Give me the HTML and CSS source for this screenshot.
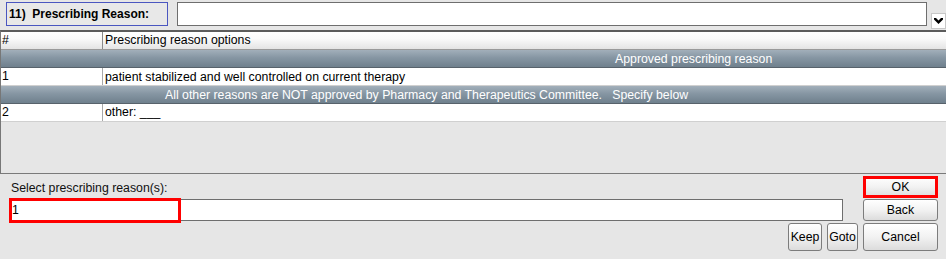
FILE: index.html
```html
<!DOCTYPE html>
<html>
<head>
<meta charset="utf-8">
<link rel="stylesheet" href="styles.css">
</head>
<body>
<div class="top">
  <div class="qlabel">11)&nbsp; Prescribing Reason:</div>
  <div class="qinput"></div>
  <div class="combo"><svg width="9" height="6" viewBox="0 0 9 6"><path d="M0 0h2l2.5 2.5L7 0h2v1.5L4.5 6 0 1.5z" fill="#000"/></svg></div>
</div>
<div class="table">
  <div class="row head"><div class="c1">#</div><div class="c2">Prescribing reason options</div></div>
  <div class="group g1">Approved prescribing reason</div>
  <div class="row data"><div class="c1">1</div><div class="c2 clip">patient stabilized and well controlled on current therapy</div></div>
  <div class="group g2">All other reasons are NOT approved by Pharmacy and Therapeutics Committee.&nbsp;&nbsp; Specify below</div>
  <div class="row data"><div class="c1">2</div><div class="c2">other: ___</div></div>
</div>
<div class="bottom">
  <div class="sel-label">Select prescribing reason(s):</div>
  <div class="btn ok">OK<span class="mark"></span></div>
  <div class="sel-wrap"><div class="sel-input">1</div><span class="mark mark-input"></span></div>
  <div class="btn back">Back</div>
  <div class="small-btns"><div class="btn keep">Keep</div><div class="btn goto">Goto</div></div>
  <div class="btn cancel">Cancel</div>
</div>
</body>
</html>
```
FILE: styles.css
```css
html, body {
  margin: 0;
  padding: 0;
  background: #e6e6e6;
  font-family: "Liberation Sans", Arial, sans-serif;
  font-size: 12.3px;
  color: #000;
  width: 946px;
  height: 259px;
  overflow: hidden;
}
.top {
  height: 30px;
  display: flex;
  align-items: flex-start;
  padding-left: 6px;
  box-sizing: border-box;
}
.qlabel {
  margin-top: 2px;
  width: 162px;
  height: 24px;
  box-sizing: border-box;
  border: 1px solid #4a56c0;
  background: #e8e8e8;
  font-weight: bold;
  font-size: 12px;
  line-height: 22px;
  padding-left: 2px;
  white-space: nowrap;
}
.qinput {
  margin-top: 2px;
  margin-left: 9px;
  width: 750px;
  height: 24px;
  box-sizing: border-box;
  border: 1px solid #6e6e6e;
  background: #fff;
}
.combo {
  margin-top: 13px;
  margin-left: 4px;
  width: 15px;
  height: 16px;
  box-sizing: border-box;
  border: 1px solid #c8c8c8;
  background: #fff;
  display: flex;
  align-items: center;
  justify-content: center;
}
.table {
  height: 144px;
  box-sizing: border-box;
  border-top: 2px solid #5c5c5c;
  border-left: 1px solid #777;
  border-bottom: 1px solid #7a7a7a;
  background: #e6e6e6;
}
.row {
  display: flex;
  height: 18px;
  box-sizing: border-box;
  line-height: 17px;
  white-space: nowrap;
}
.row .c1 {
  width: 102px;
  padding-left: 1px;
  box-sizing: border-box;
  border-right: 1px solid #a8a8a8;
}
.row .c2 {
  flex: 1;
  padding-left: 2px;
  overflow: hidden;
}
.head {
  background: linear-gradient(#ffffff, #fafafa 40%, #e4e4e4);
  border-bottom: 1px solid #9a9a9a;
}
.head .c1 { border-right: 1px solid #8a8a8a; }
.data {
  background: #fff;
  border-bottom: 1px solid #d0d0d0;
}
.data .c2.clip { line-height: 19px; height: 17px; }
.group {
  height: 18px;
  box-sizing: border-box;
  line-height: 18px;
  color: #fff;
  white-space: nowrap;
  background: linear-gradient(#a2afba, #8696a3 45%, #6f808d);
  border-bottom: 1px solid #57626b;
}
.g1 { padding-left: 614px; }
.g2 { padding-left: 164px; }
.bottom {
  display: grid;
  grid-template-columns: 849px 75px;
  grid-template-rows: 22px 22px 29px;
  column-gap: 5px;
  row-gap: 1px;
  padding: 2px 0 0 9px;
}
.sel-label {
  padding-left: 2px;
  line-height: 12px;
  padding-top: 6px;
  color: #111;
}
.sel-wrap {
  position: relative;
  width: 834px;
}
.sel-input {
  height: 22px;
  box-sizing: border-box;
  border: 1px solid #6e6e6e;
  background: #fff;
  line-height: 20px;
  padding-left: 2px;
}
.mark {
  position: absolute;
  border: 3px solid #ff0000;
  box-sizing: border-box;
  pointer-events: none;
}
.mark-input {
  left: 0;
  top: -1px;
  width: 172px;
  height: 25px;
}
.btn {
  position: relative;
  box-sizing: border-box;
  border: 1px solid #7c7c7c;
  border-radius: 3px;
  background: linear-gradient(#ffffff, #f2f2f2 50%, #dcdcdc);
  text-align: center;
  color: #000;
}
.ok { line-height: 20px; border-radius: 0; }
.ok .mark { left: -1px; top: -1px; right: -1px; bottom: -1px; }
.back { line-height: 20px; }
.cancel { line-height: 27px; margin-top: 1px; height: 28px; }
.small-btns {
  display: flex;
  justify-content: flex-end;
  gap: 5px;
  padding-top: 1px;
}
.keep, .goto {
  height: 28px;
  line-height: 26px;
}
.keep { width: 34px; }
.goto { width: 31px; }
```
